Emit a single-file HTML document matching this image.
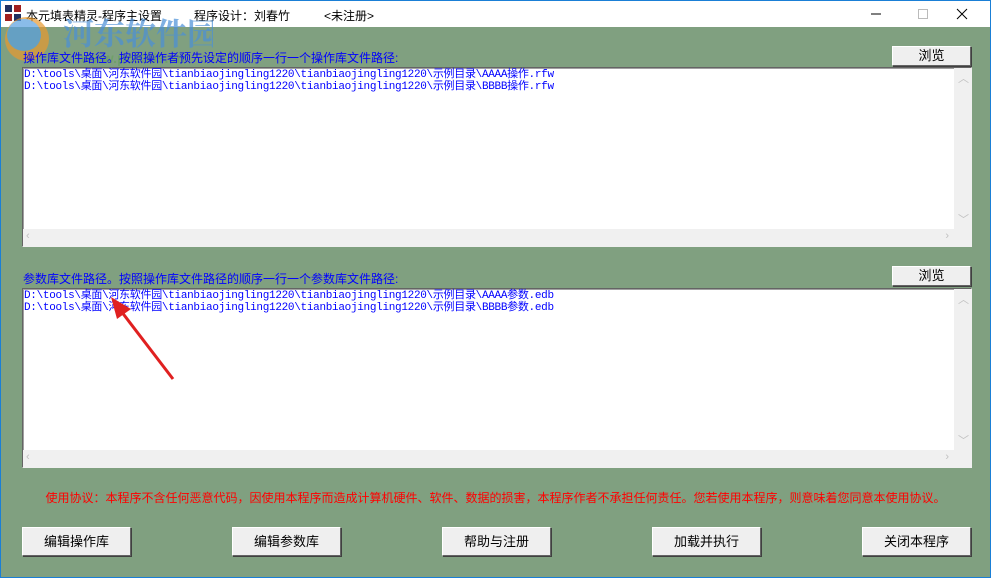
<!DOCTYPE html>
<html><head><meta charset="utf-8"><style>
*{margin:0;padding:0;box-sizing:border-box}
body{width:991px;height:578px;background:#80a080;position:relative;overflow:hidden;font-family:"Liberation Sans","Noto Sans CJK SC",sans-serif;font-size:12px}
.win{position:absolute;left:0;top:0;width:991px;height:578px;border:1px solid #1a7fd6;}
.title{position:absolute;left:0;top:0;width:989px;height:26px;background:#fff;color:#000;font-size:12px}
.title span{position:absolute;top:6px}
.lbl{position:absolute;left:22px;color:#0000ff;font-size:12px}
.btn{position:absolute;background:#efefef;border:1px solid;border-color:#fff #646464 #646464 #fff;box-shadow:1px 1px 0 #404040;text-align:center;font-size:13px;color:#000}
.box{position:absolute;left:21px;width:950px;background:#fff;border:1px solid;border-color:#646464 #f0f0f0 #f0f0f0 #646464;box-shadow:inset 1px 1px 0 #a0a0a0}
.box pre{font-family:"Liberation Mono","Noto Sans CJK SC",monospace;font-size:11px;line-height:12px;color:#0000ff;position:absolute;left:1px;top:1px;letter-spacing:-0.3px}
.vs{position:absolute;right:0;top:0;width:17px;background:#f0f0f0}
.hs{position:absolute;left:0;bottom:0;height:17px;background:#f0f0f0}
.ar{position:absolute;color:#c0c0c0;font-size:11px}
</style></head><body>
<div class="win">
<div class="title">
<svg style="position:absolute;left:4px;top:4px" width="16" height="16"><rect x="0" y="0" width="7" height="7" fill="#203060"/><rect x="9" y="0" width="7" height="7" fill="#a02020"/><rect x="0" y="9" width="7" height="7" fill="#a02020"/><rect x="9" y="9" width="7" height="7" fill="#203060"/></svg>
<span style="left:25px">本元填表精灵-程序主设置</span>
<span style="left:193px">程序设计：刘春竹</span>
<span style="left:323px">&lt;未注册&gt;</span>
<svg style="position:absolute;left:860px;top:6px" width="110" height="14"><line x1="10" y1="7" x2="20" y2="7" stroke="#000" stroke-width="1"/><rect x="57.5" y="2.5" width="9" height="9" fill="none" stroke="#bbb"/><path d="M96 2 L106 12 M106 2 L96 12" stroke="#000" stroke-width="1"/></svg>
</div>
<svg style="position:absolute;left:2px;top:4px;opacity:.7" width="210" height="70">
<ellipse cx="24" cy="34" rx="22" ry="22" fill="#e89a30"/>
<ellipse cx="21" cy="30" rx="17" ry="16" fill="#5aa0e0"/>
<text x="60" y="40" font-size="31" font-weight="bold" fill="#4a90d8" font-family="Noto Serif CJK SC,serif">河东软件园</text>
<text x="78" y="58" font-size="14" font-weight="bold" fill="#6aa060">www.pc0359.cn</text>
</svg>
<div class="lbl" style="top:48px">操作库文件路径。按照操作者预先设定的顺序一行一个操作库文件路径:</div>
<div class="btn" style="left:891px;top:45px;width:79px;height:20px;line-height:18px">浏览</div>
<div class="box" style="top:66px;height:180px">
<pre>D:\tools\桌面\河东软件园\tianbiaojingling1220\tianbiaojingling1220\示例目录\AAAA操作.rfw
D:\tools\桌面\河东软件园\tianbiaojingling1220\tianbiaojingling1220\示例目录\BBBB操作.rfw</pre>
<div class="vs" style="height:161px"><span class="ar" style="left:4px;top:2px">︿</span><span class="ar" style="left:4px;bottom:2px">﹀</span></div>
<div class="hs" style="width:948px"><span class="ar" style="left:3px;top:1px">‹</span><span class="ar" style="right:22px;top:1px">›</span></div>
</div>
<div class="lbl" style="top:269px">参数库文件路径。按照操作库文件路径的顺序一行一个参数库文件路径:</div>
<div class="btn" style="left:891px;top:265px;width:79px;height:20px;line-height:18px">浏览</div>
<div class="box" style="top:287px;height:180px">
<pre>D:\tools\桌面\河东软件园\tianbiaojingling1220\tianbiaojingling1220\示例目录\AAAA参数.edb
D:\tools\桌面\河东软件园\tianbiaojingling1220\tianbiaojingling1220\示例目录\BBBB参数.edb</pre>
<div class="vs" style="height:161px"><span class="ar" style="left:4px;top:2px">︿</span><span class="ar" style="left:4px;bottom:2px">﹀</span></div>
<div class="hs" style="width:948px"><span class="ar" style="left:3px;top:1px">‹</span><span class="ar" style="right:22px;top:1px">›</span></div>
</div>
<svg style="position:absolute;left:100px;top:290px" width="80" height="95"><line x1="72" y1="88" x2="20" y2="20" stroke="#e02020" stroke-width="3"/><polygon points="10,6 30,18 16,28" fill="#e02020"/></svg>
<div style="position:absolute;left:0;width:989px;top:488px;text-align:center;color:#ff0000;font-size:12px">使用协议：本程序不含任何恶意代码，因使用本程序而造成计算机硬件、软件、数据的损害，本程序作者不承担任何责任。您若使用本程序，则意味着您同意本使用协议。</div>
<div class="btn" style="left:21px;top:526px;width:109px;height:29px;line-height:27px">编辑操作库</div>
<div class="btn" style="left:231px;top:526px;width:109px;height:29px;line-height:27px">编辑参数库</div>
<div class="btn" style="left:441px;top:526px;width:109px;height:29px;line-height:27px">帮助与注册</div>
<div class="btn" style="left:651px;top:526px;width:109px;height:29px;line-height:27px">加载并执行</div>
<div class="btn" style="left:861px;top:526px;width:109px;height:29px;line-height:27px">关闭本程序</div>
</div>
</body></html>
